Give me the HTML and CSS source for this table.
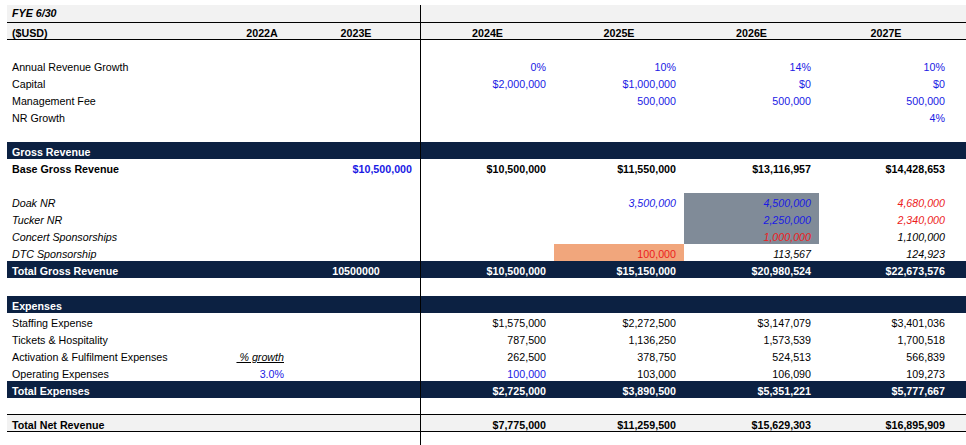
FILE: index.html
```html
<!DOCTYPE html>
<html>
<head>
<meta charset="utf-8">
<link rel="stylesheet" href="styles.css">
</head>
<body>
<div class="sheet">
  <div class="row top rule fye"><div class="lbl b i">FYE 6/30</div><div></div><div></div><div></div></div>
  <div class="row top rule b"><div class="lbl">($USD)</div><div class="hd">2022A</div><div class="hd">2023E</div><div class="hd">2024E</div><div class="hd">2025E</div><div class="hd">2026E</div><div class="hd">2027E</div></div>
  <div class="row"><div></div><div></div><div></div><div></div></div>
  <div class="row"><div class="lbl">Annual Revenue Growth</div><div></div><div></div><div class="num blue">0%</div><div class="num blue">10%</div><div class="num blue">14%</div><div class="num blue">10%</div></div>
  <div class="row"><div class="lbl">Capital</div><div></div><div></div><div class="num blue">$2,000,000</div><div class="num blue">$1,000,000</div><div class="num blue">$0</div><div class="num blue">$0</div></div>
  <div class="row"><div class="lbl">Management Fee</div><div></div><div></div><div></div><div class="num blue">500,000</div><div class="num blue">500,000</div><div class="num blue">500,000</div></div>
  <div class="row"><div class="lbl">NR Growth</div><div></div><div></div><div></div><div></div><div></div><div class="num blue">4%</div></div>
  <div class="row"><div></div><div></div><div></div><div></div></div>
  <div class="row band"><div class="lbl">Gross Revenue</div><div></div><div></div><div></div><div></div><div></div><div></div><div></div></div>
  <div class="row b"><div class="lbl">Base Gross Revenue</div><div></div><div class="num blue">$10,500,000</div><div class="num">$10,500,000</div><div class="num">$11,550,000</div><div class="num">$13,116,957</div><div class="num">$14,428,653</div></div>
  <div class="row"><div></div><div></div><div></div><div></div></div>
  <div class="row i"><div class="lbl">Doak NR</div><div></div><div></div><div></div><div class="num blue">3,500,000</div><div class="num blue slate">4,500,000</div><div class="num red">4,680,000</div></div>
  <div class="row i"><div class="lbl">Tucker NR</div><div></div><div></div><div></div><div></div><div class="num blue slate">2,250,000</div><div class="num red">2,340,000</div></div>
  <div class="row i"><div class="lbl">Concert Sponsorships</div><div></div><div></div><div></div><div></div><div class="num red slate">1,000,000</div><div class="num">1,100,000</div></div>
  <div class="row i"><div class="lbl">DTC Sponsorship</div><div></div><div></div><div></div><div class="num red orange up">100,000</div><div class="num">113,567</div><div class="num">124,923</div></div>
  <div class="row band"><div class="lbl">Total Gross Revenue</div><div></div><div class="hd">10500000</div><div class="num">$10,500,000</div><div class="num">$15,150,000</div><div class="num">$20,980,524</div><div class="num">$22,673,576</div><div></div></div>
  <div class="row gap-lg"><div></div><div></div><div></div><div></div></div>
  <div class="row band"><div class="lbl">Expenses</div><div></div><div></div><div></div><div></div><div></div><div></div><div></div></div>
  <div class="row"><div class="lbl">Staffing Expense</div><div></div><div></div><div class="num">$1,575,000</div><div class="num">$2,272,500</div><div class="num">$3,147,079</div><div class="num">$3,401,036</div></div>
  <div class="row"><div class="lbl">Tickets &amp; Hospitality</div><div></div><div></div><div class="num">787,500</div><div class="num">1,136,250</div><div class="num">1,573,539</div><div class="num">1,700,518</div></div>
  <div class="row"><div class="lbl">Activation &amp; Fulfilment Expenses</div><div class="num"><span class="ul i">&nbsp;% growth</span></div><div></div><div class="num">262,500</div><div class="num">378,750</div><div class="num">524,513</div><div class="num">566,839</div></div>
  <div class="row"><div class="lbl">Operating Expenses</div><div class="num blue">3.0%</div><div></div><div class="num blue">100,000</div><div class="num">103,000</div><div class="num">106,090</div><div class="num">109,273</div></div>
  <div class="row band"><div class="lbl">Total Expenses</div><div></div><div></div><div class="num">$2,725,000</div><div class="num">$3,890,500</div><div class="num">$5,351,221</div><div class="num">$5,777,667</div><div></div></div>
  <div class="row gap-sm"><div></div><div></div><div></div><div></div></div>
  <div class="row net b"><div class="lbl">Total Net Revenue</div><div></div><div></div><div class="num">$7,775,000</div><div class="num">$11,259,500</div><div class="num">$15,629,303</div><div class="num">$16,895,909</div><div></div></div>
  <div class="row tail"><div></div><div></div><div></div><div></div></div>
</div>
</body>
</html>
```

FILE: styles.css
```css
* { box-sizing: border-box; }
html, body { margin: 0; background: #fff; }
body {
  padding: 5px 0 0 7px;
  font-family: "Liberation Sans", Arial, sans-serif;
  font-size: 10.7px;
  color: #000;
  overflow: hidden;
}
.sheet { width: 959px; }
.row {
  display: grid;
  grid-template-columns: 225px 60px 128px 134px 130px 135px 134px 13px;
  height: 17px;
}
.row > div {
  padding-top: 4px;
  line-height: 13px;
  white-space: nowrap;
}
.row > div:nth-child(4) { border-left: 1px solid #000; }
.top { background: #f2f2f2; }
.rule { border-bottom: 1px solid #000; }
.fye { height: 18px; }
.fye > div { padding-top: 2px; }
.gap-lg { height: 18px; }
.gap-sm { height: 16px; }
.lbl { padding-left: 5px; }
.num { text-align: right; padding-right: 8px; }
.hd { text-align: center; }
.b { font-weight: bold; }
.i { font-style: italic; }
.up { font-style: normal; }
.ul { text-decoration: underline; }
.blue { color: #1a1ae4; }
.red { color: #ec1c1c; }
.slate { background: #808b98; }
.orange { background: #f1a67c; }
.band { background: #0c2142; color: #fff; font-weight: bold; }
.net { background: #f2f2f2; border-top: 1px solid #000; border-bottom: 1px solid #000; height: 18px; }
.tail { height: 14px; }
```
